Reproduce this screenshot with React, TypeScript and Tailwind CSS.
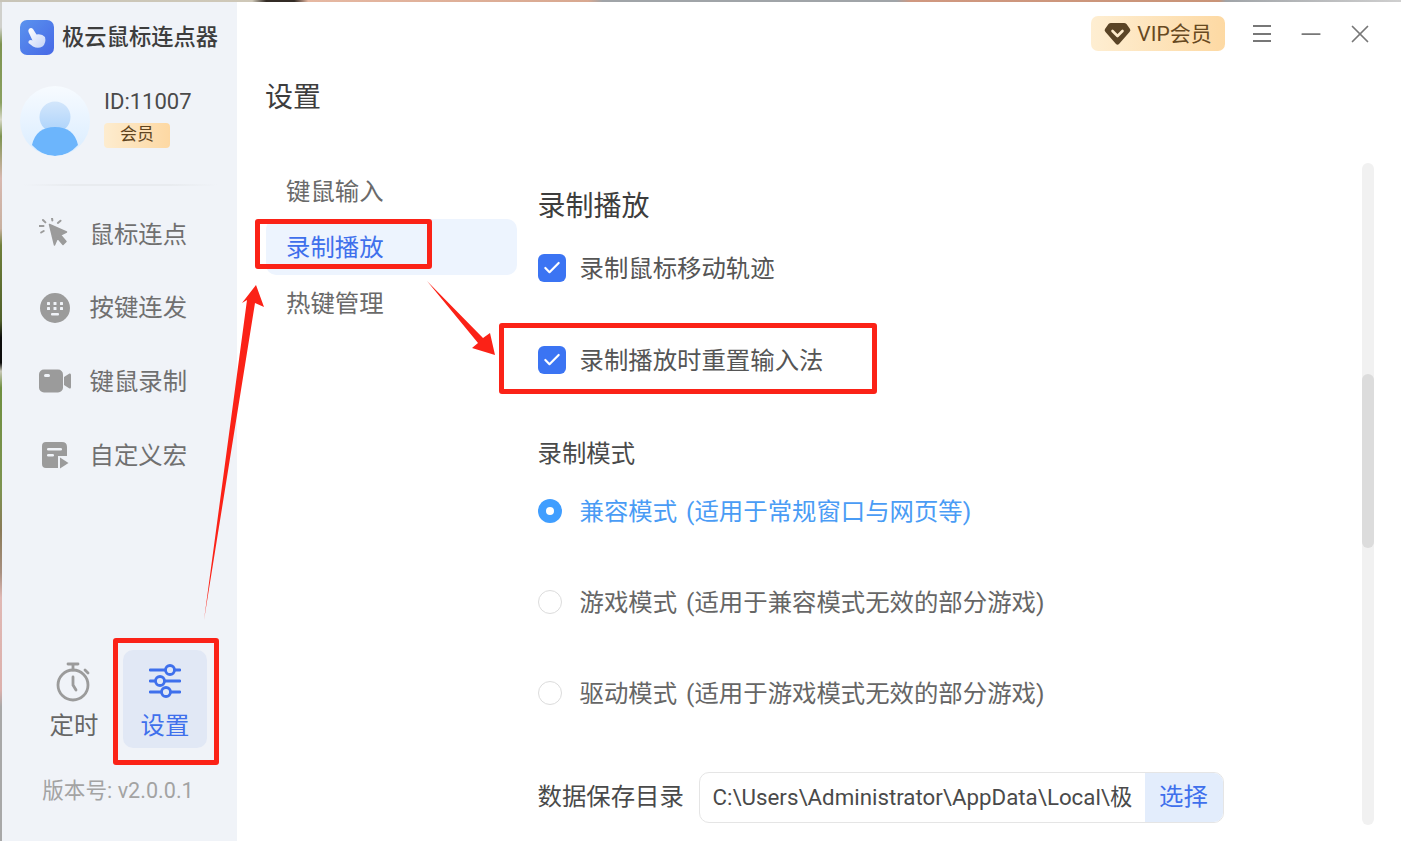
import React from 'react';
import { Check, Minus, X } from 'lucide-react';

const font = "font-['Roboto','Noto_Sans_CJK_SC',sans-serif]";

const CursorIcon = () => (
  <svg width="32" height="32" viewBox="1 3 32 32" fill="#9b9b9b">
    <path d="M11.5 9.5 L28.5 17 L22.5 20 L28 26.5 L25 29.5 L19.5 23 L16.5 30 Z" strokeLinejoin="round" stroke="#9b9b9b" strokeWidth="1.5" />
    <rect x="13" y="0.5" width="2" height="6" rx="1" transform="rotate(-8 14 3)" />
    <rect x="5" y="3.5" width="2" height="5.5" rx="1" transform="rotate(-45 6 6)" />
    <rect x="0.5" y="10" width="6" height="2" rx="1" />
    <rect x="2" y="16" width="5" height="2" rx="1" transform="rotate(-30 4 17)" />
    <rect x="20" y="4" width="2" height="5.5" rx="1" transform="rotate(50 21 7)" />
  </svg>
);

const KeypadIcon = () => (
  <svg width="32" height="32" viewBox="0 0 32 32">
    <circle cx="16" cy="16" r="15" fill="#9b9b9b" />
    <g fill="#f0f3f8">
      <rect x="8" y="10" width="3" height="3" rx="0.6" />
      <rect x="14.5" y="10" width="3" height="3" rx="0.6" />
      <rect x="21" y="10" width="3" height="3" rx="0.6" />
      <rect x="8" y="15" width="3" height="3" rx="0.6" />
      <rect x="14.5" y="15" width="3" height="3" rx="0.6" />
      <rect x="21" y="15" width="3" height="3" rx="0.6" />
      <rect x="12" y="21" width="8" height="2.5" rx="1" />
    </g>
  </svg>
);

const CameraIcon = () => (
  <svg width="32" height="24" viewBox="0 0 32 24">
    <rect x="0" y="0.5" width="24" height="23" rx="5" fill="#9b9b9b" />
    <path d="M25 8 L30.5 4.5 Q32 4 32 6 V18 Q32 20 30.5 19.5 L25 16 Z" fill="#9b9b9b" />
    <rect x="5" y="5" width="6" height="3" rx="1.5" fill="#f0f3f8" />
  </svg>
);

const MacroIcon = () => (
  <svg width="28" height="28" viewBox="0 0 28 28">
    <path d="M5 1 H21 Q26 1 26 6 V15 L17 15 V27 H5 Q1 27 1 23 V5 Q1 1 5 1 Z" fill="#9b9b9b" />
    <rect x="6" y="7" width="15" height="2.6" rx="1.3" fill="#f0f3f8" />
    <rect x="6" y="13" width="7" height="2.6" rx="1.3" fill="#f0f3f8" />
    <path d="M19 16.5 L27.5 22 L19 27.5 Z" fill="#9b9b9b" />
  </svg>
);

const TimerIcon = () => (
  <svg width="36" height="40" viewBox="0 0 36 40" fill="none" stroke="#9b9b9b" strokeWidth="2.8" strokeLinecap="round">
    <circle cx="17" cy="23" r="15" />
    <path d="M12 2 H22 M17 2 V8 M29 8 L32 11 M17 15 V23 L20 28" />
  </svg>
);

const SlidersIcon = () => (
  <svg width="32" height="34" viewBox="0 0 32 34" fill="none" stroke="#3f70ec" strokeWidth="2.8" strokeLinecap="round">
    <path d="M1 6 H16 M26 6 H31 M1 17 H6 M16 17 H31 M1 28 H12 M22 28 H31" />
    <circle cx="21" cy="6" r="4.5" />
    <circle cx="11" cy="17" r="4.5" />
    <circle cx="17" cy="28" r="4.5" />
  </svg>
);

const DiamondIcon = () => (
  <svg width="27" height="24" viewBox="0 0 27 24">
    <path d="M7 1 H20 Q21.5 1 22.5 2 L26 7 Q27 8.5 25.5 10 L15 22 Q13.5 23.5 12 22 L1.5 10 Q0 8.5 1 7 L4.5 2 Q5.5 1 7 1 Z" fill="#5a4426" />
    <path d="M8.5 9 L13.5 14 L18.5 9" fill="none" stroke="#fdeacb" strokeWidth="2.6" strokeLinecap="round" strokeLinejoin="round" />
  </svg>
);

const menu = [
  { label: '鼠标连点', icon: <CursorIcon /> },
  { label: '按键连发', icon: <KeypadIcon /> },
  { label: '键鼠录制', icon: <CameraIcon /> },
  { label: '自定义宏', icon: <MacroIcon /> },
];

const Checkbox = () => (
  <span className="w-7 h-7 rounded-md bg-[#3b74f3] flex items-center justify-center shrink-0">
    <Check size={20} color="#fff" strokeWidth={2.6} />
  </span>
);

const Radio = ({ on, label }: { on?: boolean; label: string }) => (
  <div className="flex items-center gap-[18px] h-[34px]">
    {on ? (
      <span className="w-6 h-6 rounded-full bg-[#409eff] flex items-center justify-center">
        <span className="w-2 h-2 rounded-full bg-white" />
      </span>
    ) : (
      <span className="w-6 h-6 rounded-full border border-[#dcdcdc] bg-white" />
    )}
    <span className={`pt-[2px] [word-spacing:3px] ${on ? 'text-[#4a9cf5]' : 'text-[#666]'}`}>{label}</span>
  </div>
);

export default function App() {
  return (
    <div className={`relative w-[1401px] h-[841px] overflow-hidden flex flex-col bg-white text-[24.4px] ${font}`}>
      <div className="h-[2px] shrink-0 bg-[linear-gradient(90deg,#c8c4b8_0%,#cfc8b8_18%,#332b25_19%,#332b25_21%,#e6b8a2_22%,#d8a890_42%,#a0a4a8_43%,#a0a4a8_64%,#d09880_65%,#c99478_87%,#a0a4a8_87.5%,#cfcfcf_100%)]" />
      <div className="flex flex-1 min-h-0">
        <div className="w-[2px] shrink-0 bg-[linear-gradient(180deg,#d0d0cc_0%,#d0d0cc_3%,#7d9350_5%,#8aa060_12%,#d8d8c8_14%,#7d9350_16%,#d8b8b0_21%,#c8b0a0_27%,#6f7f3a_29%,#4f5f2a_38%,#0c0c0c_40%,#0c0c0c_43%,#c8c8b8_44%,#6f8f40_46%,#7d9350_58%,#8a7a58_63%,#a89080_68%,#e0b8b4_71%,#dcb0ac_82%,#a8a8a8_84%,#a8a8a8_100%)]" />

        {/* sidebar */}
        <aside className="w-[235px] shrink-0 bg-[#f0f3f8] flex flex-col pl-[18px]">
          <div className="flex items-center gap-2 mt-[18px] h-[35px]">
            <svg width="34" height="35" viewBox="0 0 34 35">
              <defs>
                <linearGradient id="logo" x1="0" y1="0" x2="1" y2="1">
                  <stop offset="0" stopColor="#5a93ee" />
                  <stop offset="1" stopColor="#4768e6" />
                </linearGradient>
                <linearGradient id="hand" x1="0" y1="0" x2="1" y2="1">
                  <stop offset="0" stopColor="#ffffff" />
                  <stop offset="1" stopColor="#c3d2f7" />
                </linearGradient>
              </defs>
              <rect width="34" height="35" rx="7" fill="url(#logo)" />
              <path d="M9 9 Q11 7 13 9 L16.5 14.5 Q22 13.5 25 17 Q26.5 23 22.5 26.5 Q18 29 13 26.5 L8.5 23 Q8 20 11 20 L12.5 20.5 L8.5 12 Q8 10 9 9 Z" fill="url(#hand)" />
            </svg>
            <span className="text-[22.3px] font-medium text-[#3d3d3d] leading-none -mt-[1px]">极云鼠标连点器</span>
          </div>

          <div className="flex items-center mt-[31px]">
            <svg width="70" height="70" viewBox="0 0 70 70">
              <defs>
                <linearGradient id="avatarBg" x1="0" y1="0" x2="0" y2="1">
                  <stop offset="0" stopColor="#f7fbff" />
                  <stop offset="1" stopColor="#d9ecff" />
                </linearGradient>
                <linearGradient id="head" x1="0" y1="0" x2="0" y2="1">
                  <stop offset="0" stopColor="#d3e6fb" />
                  <stop offset="1" stopColor="#acd3fb" />
                </linearGradient>
                <clipPath id="avatarClip">
                  <circle cx="35" cy="35" r="35" />
                </clipPath>
              </defs>
              <circle cx="35" cy="35" r="35" fill="url(#avatarBg)" />
              <circle cx="35" cy="31" r="15.5" fill="url(#head)" />
              <path d="M12 59 Q16 41 35 41 Q54 41 58 59 Q48 70 35 70 Q22 70 12 59 Z" fill="#6cb5fc" clipPath="url(#avatarClip)" />
            </svg>
            <div className="ml-[14px] mb-[8px] flex flex-col items-start">
              <span className="text-[22px] leading-[30px] text-[#4a4a4a]">ID:11007</span>
              <span className="mt-[6px] w-[66px] h-[25px] rounded bg-[linear-gradient(90deg,#fdeccf,#fdd8a3)] flex items-center justify-center text-[17px] text-[#5f4420]">
                会员
              </span>
            </div>
          </div>

          <div className="mt-[28px] ml-[3px] w-[195px] h-[2px] bg-[linear-gradient(90deg,transparent,#e8ebef_25%,#e8ebef_75%,transparent)]" />

          <nav className="mt-[11px] flex flex-col">
            {menu.map((item) => (
              <div key={item.label} className="h-[73.7px] flex items-center">
                <span className="w-[69.5px] flex justify-center">{item.icon}</span>
                <span className="pt-[2px] text-[#707070]">{item.label}</span>
              </div>
            ))}
          </nav>

          <div className="mt-auto flex pl-[1px]">
            <div className="w-[102px] h-[98px] flex flex-col items-center pl-[4px] pt-[12px] gap-[7px]">
              <TimerIcon />
              <span className="text-[#666] leading-[34px]">定时</span>
            </div>
            <div className="w-[84px] h-[98px] rounded-[10px] bg-[#e1e8f5] flex flex-col items-center pt-[14px] gap-[11px]">
              <SlidersIcon />
              <span className="text-[#3f70ec] leading-[34px]">设置</span>
            </div>
          </div>
          <div className="mt-[28px] mb-[35px] w-[196px] text-center text-[21.6px] leading-[30px] text-[#a3a3a3]">版本号: v2.0.0.1</div>
        </aside>

        {/* main */}
        <main className="relative flex-1 min-w-0 flex flex-col">
          <div className="flex items-center justify-end h-[35px] mt-[14px] pr-[26px]">
            <div className="w-[134px] h-[35px] rounded-[7px] bg-[linear-gradient(90deg,#feeed2,#fdd9a3)] flex items-center justify-center gap-[6px] text-[21px] text-[#67491f]">
              <DiamondIcon />
              <span className="pt-[2px]">VIP会员</span>
            </div>
            <div className="ml-[28px] w-[18px] flex flex-col gap-[5.5px]">
              <span className="h-[2px] bg-[#777]" />
              <span className="h-[2px] bg-[#777]" />
              <span className="h-[2px] bg-[#777]" />
            </div>
            <Minus className="ml-[25px]" size={30} color="#777" strokeWidth={1.4} />
            <X className="ml-[19px]" size={30} color="#777" strokeWidth={1.4} />
          </div>

          <h1 className="ml-[28px] mt-[27px] text-[28px] leading-[40px] text-[#3d3d3d] font-normal">设置</h1>

          <div className="flex mt-[43px] flex-1 min-h-0">
            <div className="w-[300.5px] shrink-0 pt-[2px] pl-[29px]">
              <div className="w-[251px] flex flex-col">
                <div className="h-[56px] flex items-center pl-[20px] pt-[2px] text-[#6a6a6a]">键鼠输入</div>
                <div className="h-[56px] flex items-center pl-[20px] pt-[2px] rounded-[10px] bg-[#edf4fe] text-[#3f70ec]">录制播放</div>
                <div className="h-[56px] flex items-center pl-[20px] pt-[2px] text-[#6a6a6a]">热键管理</div>
              </div>
            </div>

            <div className="flex flex-col items-start text-[#555]">
              <h2 className="text-[28px] leading-[40px] text-[#3d3d3d] font-normal mt-[26px]">录制播放</h2>
              <div className="flex items-center gap-[14px] mt-[22px]">
                <Checkbox />
                <span className="pt-[2px]">录制鼠标移动轨迹</span>
              </div>
              <div className="flex items-center gap-[14px] mt-[53px]">
                <Checkbox />
                <span className="pt-[2px]">录制播放时重置输入法</span>
              </div>
              <div className="mt-[58px] leading-[34px] text-[#4a4a4a]">录制模式</div>
              <div className="mt-[23px] flex flex-col gap-[57px]">
                <Radio on label="兼容模式 (适用于常规窗口与网页等)" />
                <Radio label="游戏模式 (适用于兼容模式无效的部分游戏)" />
                <Radio label="驱动模式 (适用于游戏模式无效的部分游戏)" />
              </div>
              <div className="mt-[62px] flex items-center">
                <span className="w-[161px] text-[#4a4a4a]">数据保存目录</span>
                <div className="w-[525px] h-[51px] rounded-[10px] border border-[#e5e5e5] flex items-stretch overflow-hidden">
                  <span className="flex-1 flex items-center pl-[13px] text-[22.3px] text-[#4a4a4a] whitespace-nowrap overflow-hidden">
                    C:\Users\Administrator\AppData\Local\极
                  </span>
                  <span className="w-[78px] bg-[#e3edfc] text-[#3f70ec] flex items-center justify-center">选择</span>
                </div>
              </div>
            </div>

            <div className="ml-auto mr-[27px] mt-[2px] mb-[16px] w-3 rounded-full bg-[#f1f1f1] flex flex-col">
              <div className="mt-[211px] h-[174px] rounded-full bg-[#dcdcdc]" />
            </div>
          </div>
        </main>
      </div>

      {/* red annotations over the screenshot */}
      <div className="absolute left-[255px] top-[219px] w-[177px] h-[50px] border-[5px] border-[#fb2217] rounded-[3px]" />
      <div className="absolute left-[499px] top-[323px] w-[378px] h-[71px] border-[5px] border-[#fb2217] rounded-[3px]" />
      <div className="absolute left-[113px] top-[638px] w-[106px] h-[127px] border-[5px] border-[#fb2217] rounded-[3px]" />
      <svg className="absolute left-0 top-0 pointer-events-none" width="1401" height="841">
        <polygon points="204,620 247,300 242,303 256,285 264,307 255,303" fill="#fb2217" />
        <polygon points="427,281 483,338 490,333 495,355 472,348 478,343" fill="#fb2217" />
      </svg>
    </div>
  );
}
